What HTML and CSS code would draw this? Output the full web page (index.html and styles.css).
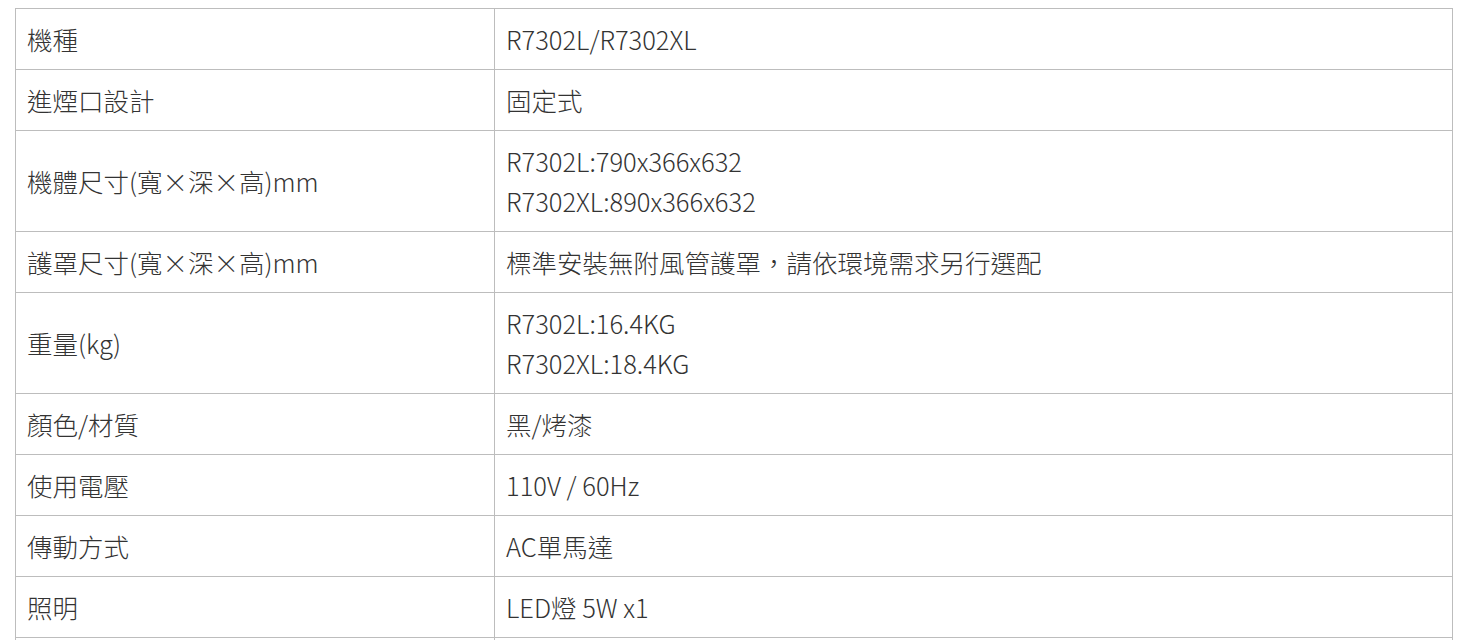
FILE: index.html
```html
<!DOCTYPE html>
<html lang="zh-Hant">
<head>
<meta charset="utf-8">
<title>規格</title>
<link rel="stylesheet" href="styles.css">
</head>
<body>
<table class="spec">
  <colgroup><col class="c-label"><col class="c-value"></colgroup>
  <tbody>
    <tr><td>機種</td><td>R7302L/R7302XL</td></tr>
    <tr><td>進煙口設計</td><td>固定式</td></tr>
    <tr><td>機體尺寸(寬×深×高)mm</td><td>R7302L:790x366x632<br>R7302XL:890x366x632</td></tr>
    <tr><td>護罩尺寸(寬×深×高)mm</td><td>標準安裝無附風管護罩，請依環境需求另行選配</td></tr>
    <tr><td>重量(kg)</td><td>R7302L:16.4KG<br>R7302XL:18.4KG</td></tr>
    <tr><td>顏色/材質</td><td>黑/烤漆</td></tr>
    <tr><td>使用電壓</td><td>110V / 60Hz</td></tr>
    <tr><td>傳動方式</td><td>AC單馬達</td></tr>
    <tr><td>照明</td><td>LED燈 5W x1</td></tr>
    <tr class="empty"><td></td><td></td></tr>
  </tbody>
</table>
</body>
</html>
```

FILE: styles.css
```css
html, body {
  margin: 0;
  padding: 0;
  background: #fff;
}
body {
  padding: 8px 11px 0 15px;
  font-family: "Noto Sans CJK TC", "Noto Sans", sans-serif;
  color: #333;
}
.spec {
  width: 1438px;
  border-collapse: collapse;
  table-layout: fixed;
}
.c-label { width: 479px; }
.spec td {
  border: 1px solid #bdbdbd;
  padding: 10px 11px;
  font-size: 25.5px;
  font-weight: 300;
  line-height: 40px;
  vertical-align: middle;
  text-align: left;
}
.spec .empty td {
  height: 40px;
}
```
